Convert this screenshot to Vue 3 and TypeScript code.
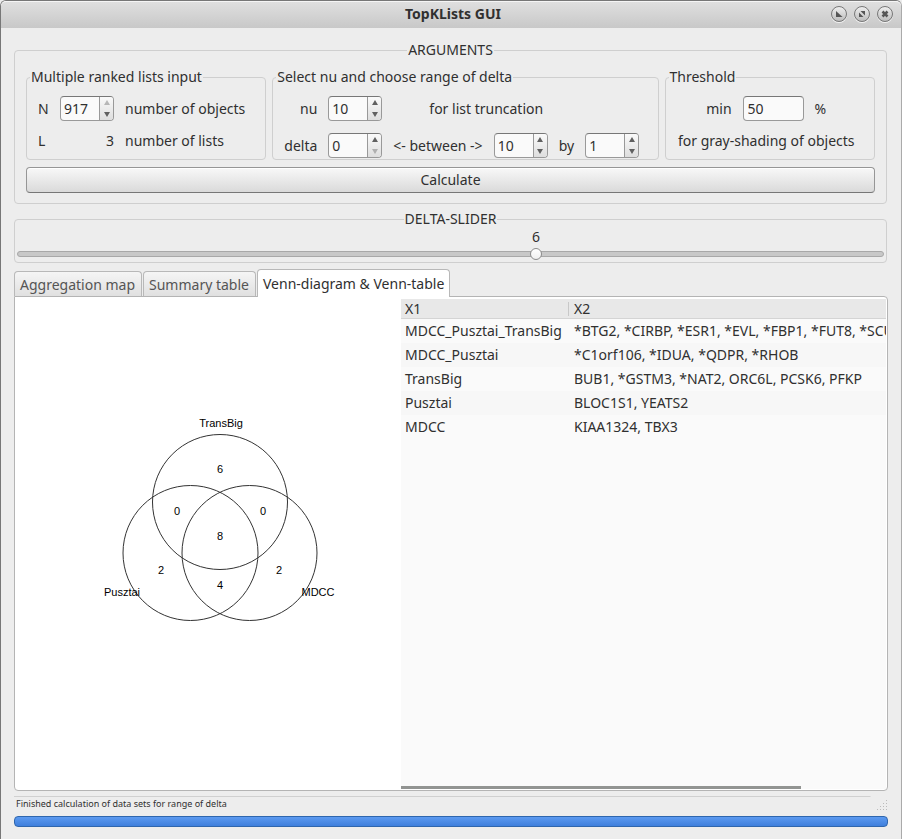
<script setup lang="ts">
import { computed, ref } from 'vue'

interface VennRow {
  sets: string
  genes: string
}

interface VennLabel {
  text: string
  x: number
  y: number
}

const objects = ref(917)
const nu = ref(10)
const deltaMin = ref(0)
const deltaMax = ref(10)
const deltaStep = ref(1)
const threshold = ref('50')
const delta = ref(6)
const activeTab = ref(2)

const tabs = ['Aggregation map', 'Summary table', 'Venn-diagram & Venn-table']

const rows: VennRow[] = [
  { sets: 'MDCC_Pusztai_TransBig', genes: '*BTG2, *CIRBP, *ESR1, *EVL, *FBP1, *FUT8, *SCU' },
  { sets: 'MDCC_Pusztai', genes: '*C1orf106, *IDUA, *QDPR, *RHOB' },
  { sets: 'TransBig', genes: 'BUB1, *GSTM3, *NAT2, ORC6L, PCSK6, PFKP' },
  { sets: 'Pusztai', genes: 'BLOC1S1, YEATS2' },
  { sets: 'MDCC', genes: 'KIAA1324, TBX3' },
]

const vennLabels: VennLabel[] = [
  { text: 'TransBig', x: 206, y: 130 },
  { text: 'Pusztai', x: 107, y: 299 },
  { text: 'MDCC', x: 303, y: 299 },
  { text: '6', x: 205, y: 176 },
  { text: '0', x: 162, y: 218 },
  { text: '0', x: 248, y: 218 },
  { text: '8', x: 205, y: 243 },
  { text: '2', x: 146, y: 277 },
  { text: '2', x: 264, y: 277 },
  { text: '4', x: 205, y: 292 },
]

const sliderOffset = computed(() => `${(delta.value / 10) * 100}%`)
</script>

<template>
  <div class="window">
    <header class="titlebar">
      <h1>TopKLists GUI</h1>
      <div class="window-buttons">
        <button type="button" aria-label="Minimize">
          <svg viewBox="0 0 14 14"><path d="M4 4v6h6.500z" /></svg>
        </button>
        <button type="button" aria-label="Maximize">
          <svg viewBox="0 0 14 14"><path d="M5.500 4H10v4.500zM4 5.500V10h4.500z" /></svg>
        </button>
        <button type="button" aria-label="Close">
          <svg viewBox="0 0 14 14"><path class="cross" d="M4.500 4.500l5 5M9.500 4.500l-5 5" /></svg>
        </button>
      </div>
    </header>

    <main class="content">
      <fieldset class="group arguments">
        <legend class="centered">ARGUMENTS</legend>
        <div class="groups">
          <fieldset class="group lists">
            <legend>Multiple ranked lists input</legend>
            <div class="lists-grid">
              <label for="objects">N</label>
              <div class="spin">
                <input id="objects" v-model.number="objects" type="number" max="917" />
                <div class="steps">
                  <button type="button" aria-label="Increase N" disabled><i class="up"></i></button>
                  <button type="button" aria-label="Decrease N" @click="objects--"><i class="down"></i></button>
                </div>
              </div>
              <span>number of objects</span>
              <span>L</span>
              <span class="right">3</span>
              <span>number of lists</span>
            </div>
          </fieldset>

          <fieldset class="group range">
            <legend>Select nu and choose range of delta</legend>
            <div class="range-grid">
              <label class="right" for="nu">nu</label>
              <div class="spin">
                <input id="nu" v-model.number="nu" type="number" />
                <div class="steps">
                  <button type="button" aria-label="Increase nu" @click="nu++"><i class="up"></i></button>
                  <button type="button" aria-label="Decrease nu" @click="nu--"><i class="down"></i></button>
                </div>
              </div>
              <span class="truncation">for list truncation</span>
              <label class="right" for="delta-min">delta</label>
              <div class="spin">
                <input id="delta-min" v-model.number="deltaMin" type="number" min="0" />
                <div class="steps">
                  <button type="button" aria-label="Increase lower delta" @click="deltaMin++"><i class="up"></i></button>
                  <button type="button" aria-label="Decrease lower delta" disabled><i class="down"></i></button>
                </div>
              </div>
              <label for="delta-max">&lt;- between -&gt;</label>
              <div class="spin">
                <input id="delta-max" v-model.number="deltaMax" type="number" />
                <div class="steps">
                  <button type="button" aria-label="Increase upper delta" @click="deltaMax++"><i class="up"></i></button>
                  <button type="button" aria-label="Decrease upper delta" @click="deltaMax--"><i class="down"></i></button>
                </div>
              </div>
              <label for="delta-step">by</label>
              <div class="spin">
                <input id="delta-step" v-model.number="deltaStep" type="number" />
                <div class="steps">
                  <button type="button" aria-label="Increase step" @click="deltaStep++"><i class="up"></i></button>
                  <button type="button" aria-label="Decrease step" @click="deltaStep--"><i class="down"></i></button>
                </div>
              </div>
            </div>
          </fieldset>

          <fieldset class="group threshold">
            <legend>Threshold</legend>
            <div class="threshold-rows">
              <div class="threshold-field">
                <label for="threshold">min</label>
                <input id="threshold" v-model="threshold" class="entry" type="text" />
                <span>%</span>
              </div>
              <span>for gray-shading of objects</span>
            </div>
          </fieldset>
        </div>
        <button class="calculate" type="button">Calculate</button>
      </fieldset>

      <fieldset class="group slider-group">
        <legend class="centered">DELTA-SLIDER</legend>
        <div class="slider-scale">
          <output class="slider-value" for="delta" :style="{ marginLeft: sliderOffset }">{{ delta }}</output>
        </div>
        <input id="delta" v-model.number="delta" class="slider" type="range" min="0" max="10" aria-label="Delta" />
      </fieldset>

      <div class="tabs" role="tablist">
        <button
          v-for="(tab, index) in tabs"
          :key="tab"
          class="tab"
          :class="{ active: index === activeTab }"
          type="button"
          role="tab"
          :aria-selected="index === activeTab"
          @click="activeTab = index"
        >
          {{ tab }}
        </button>
      </div>

      <section class="pane" role="tabpanel">
        <svg class="venn" viewBox="0 0 386 492" preserveAspectRatio="xMidYMin meet">
          <circle cx="205" cy="205" r="67.5" />
          <circle cx="175.500" cy="256" r="67.5" />
          <circle cx="234.500" cy="256" r="67.5" />
          <text v-for="(label, index) in vennLabels" :key="index" :x="label.x" :y="label.y">{{ label.text }}</text>
        </svg>
        <div class="table-view">
          <table>
            <colgroup>
              <col class="sets-column" />
              <col />
            </colgroup>
            <thead>
              <tr>
                <th scope="col">X1</th>
                <th scope="col">X2</th>
              </tr>
            </thead>
            <tbody>
              <tr v-for="row in rows" :key="row.sets">
                <td>{{ row.sets }}</td>
                <td>{{ row.genes }}</td>
              </tr>
            </tbody>
          </table>
          <div class="scrollbar"></div>
        </div>
      </section>

      <footer class="status">
        <div class="status-line">
          <p>Finished calculation of data sets for range of delta</p>
          <svg class="grip" viewBox="0 0 12 12">
            <path d="M10 1.500h1M7 4.500h1M10 4.500h1M4 7.500h1M7 7.500h1M10 7.500h1M1 10.500h1M4 10.500h1M7 10.500h1M10 10.500h1" />
          </svg>
        </div>
        <div class="progress" role="progressbar" aria-label="Calculation progress" aria-valuenow="100"></div>
      </footer>
    </main>
  </div>
</template>

<style>
body {
  background: #ededed;
}
</style>

<style scoped>
* {
  box-sizing: border-box;
}

.window {
  display: flex;
  flex-direction: column;
  min-height: 100vh;
  border: 1px solid #777;
  border-right-color: #aaa;
  border-radius: 6px 6px 0 0;
  background: #ededed;
  color: #303030;
  font-family: "Noto Sans", "Open Sans", sans-serif;
  font-size: 14px;
  line-height: 20px;
}

button,
input {
  margin: 0;
  color: inherit;
  font: inherit;
}

.titlebar {
  display: grid;
  grid-template-columns: 1fr auto 1fr;
  align-items: center;
  height: 27px;
  padding: 0 8px 2px 12px;
  border-top: 1px solid #f5f5f5;
  border-radius: 5px 5px 0 0;
  background: linear-gradient(#dfdfdf, #c8c8c8);
}

h1 {
  grid-column: 2;
  margin: 0;
  font-size: 14px;
  font-weight: 700;
}

.window-buttons {
  display: flex;
  justify-content: flex-end;
  gap: 7px;
}

.window-buttons button {
  width: 16px;
  height: 16px;
  padding: 0;
  border: 1px solid #777;
  border-radius: 50%;
  background: linear-gradient(#eee, #bcbcbc);
  box-shadow: 0 1px 0 #f2f2f2;
}

.window-buttons svg {
  display: block;
  width: 100%;
  fill: #555;
}

.window-buttons .cross {
  stroke: #555;
  stroke-width: 2.5;
}

.content {
  display: flex;
  flex: 1;
  flex-direction: column;
  padding: 12px 13px 13px;
}

.group {
  min-width: 0;
  margin: 0;
  padding: 0;
  border: 1px solid #cfcfcf;
  border-radius: 4px;
}

.group > legend {
  margin-left: 3px;
  padding: 0 1px;
}

.group > legend.centered {
  margin: 0 auto;
}

.arguments {
  margin-right: 1px;
  padding: 7px 11px 10px;
}

.groups {
  display: flex;
  gap: 6px;
}

.lists {
  flex: 240 1 0;
}

.range {
  flex: 387 1 0;
}

.threshold {
  flex: 210 1 0;
}

.lists-grid,
.range-grid {
  display: grid;
  justify-content: start;
  align-items: center;
  column-gap: 11px;
  padding: 9px 11px 0;
  white-space: nowrap;
}

.lists-grid {
  grid-template-columns: 11px auto auto;
  row-gap: 10px;
}

.range-grid {
  grid-template-columns: repeat(6, auto);
  row-gap: 12px;
  padding-bottom: 1px;
}

.right {
  text-align: right;
}

.truncation {
  grid-column: 3 / 7;
  padding-left: 36px;
}

.spin {
  display: flex;
  width: 54px;
  height: 25px;
  overflow: hidden;
  border: 1px solid #999;
  border-top-color: #777;
  border-radius: 4px;
  background: #fafafa;
}

.spin input {
  flex: 1;
  min-width: 0;
  padding: 0 3px;
  border: 0;
  outline: 0;
  background: transparent;
  appearance: textfield;
}

.spin input::-webkit-inner-spin-button {
  appearance: none;
}

.steps {
  display: flex;
  flex-direction: column;
  width: 14px;
  border-left: 1px solid #999;
  background: linear-gradient(#fafafa, #dedede);
}

.steps button {
  display: flex;
  flex: 1;
  align-items: center;
  justify-content: center;
  padding: 0;
  border: 0;
  background: transparent;
}

.steps i {
  border: 3px solid transparent;
}

.steps .up {
  border-top: 0;
  border-bottom: 5px solid #606060;
}

.steps .down {
  border-top: 5px solid #606060;
  border-bottom: 0;
}

.steps button:disabled {
  opacity: 0.4;
}

.threshold-rows {
  display: flex;
  flex-direction: column;
  align-items: center;
  gap: 10px;
  padding: 9px 18px 0 11px;
  white-space: nowrap;
}

.threshold-field {
  display: flex;
  align-items: center;
  gap: 11px;
}

.entry {
  width: 61px;
  height: 25px;
  padding: 0 4px;
  border: 1px solid #999;
  border-top-color: #777;
  border-radius: 4px;
  background: #fafafa;
}

.calculate {
  display: block;
  width: 100%;
  height: 26px;
  margin-top: 7px;
  padding: 0;
  border: 1px solid #969696;
  border-bottom-color: #777;
  border-radius: 4px;
  background: linear-gradient(#f8f8f8, #dadada);
  box-shadow: inset 0 1px 0 #fff;
}

.slider-group {
  margin: 5px 1px 0 0;
  padding: 0 2px;
}

.slider-scale {
  display: flex;
  height: 17px;
  padding: 0 6px;
}

.slider-value {
  line-height: 15px;
  transform: translateX(-50%);
}

.slider {
  display: block;
  width: 100%;
  height: 16px;
  appearance: none;
  background: transparent;
}

.slider::-webkit-slider-runnable-track {
  height: 6px;
  border: 1px solid #a8a8a8;
  border-radius: 3px;
  background: #c8c8c8;
}

.slider::-webkit-slider-thumb {
  width: 12px;
  height: 12px;
  margin-top: -4px;
  appearance: none;
  border: 1px solid #8c8c8c;
  border-radius: 50%;
  background: linear-gradient(#fff, #f0f0f0);
}

.tabs {
  display: flex;
  align-items: flex-end;
  gap: 1px;
  margin-top: 6px;
}

.tab {
  height: 25px;
  padding: 1px 5px 0;
  border: 1px solid #b8b8b8;
  border-bottom: 0;
  border-radius: 4px 4px 0 0;
  background: linear-gradient(#f5f5f5, #e0e0e0);
  color: #555;
  white-space: nowrap;
}

.tab:not(.active) {
  padding-right: 6px;
}

.tab.active {
  z-index: 1;
  height: 28px;
  margin-bottom: -1px;
  background: #fff;
  color: #303030;
}

.pane {
  display: flex;
  flex: 1;
  padding: 2px 1px 1px 0;
  border: 1px solid #b4b4b4;
  border-radius: 0 4px 4px 4px;
  background: #fff;
}

.venn {
  flex: 386 1 0;
  min-width: 0;
  margin-top: -2px;
  overflow: visible;
}

.venn circle {
  fill: none;
  stroke: #333;
  stroke-width: 1;
}

.venn text {
  fill: #000;
  font-family: "Liberation Sans", Arial, sans-serif;
  font-size: 11px;
  text-anchor: middle;
}

.table-view {
  display: flex;
  flex: 485 1 0;
  flex-direction: column;
  justify-content: space-between;
  min-width: 0;
  overflow: hidden;
  background: #fafafa;
}

table {
  width: 100%;
  border-spacing: 0;
  table-layout: fixed;
}

.sets-column {
  width: 169px;
}

th,
td {
  height: 24px;
  padding: 0 4px;
  overflow: hidden;
  font-weight: 400;
  line-height: 20px;
  text-align: left;
  white-space: nowrap;
}

td {
  padding-right: 0;
}

th {
  height: 20px;
  border-bottom: 1px solid #d4d4d4;
  background: #e8e8e8;
  line-height: 19px;
}

th:first-child {
  background: linear-gradient(#c8c8c8, #c8c8c8) right 1px center / 1px 14px no-repeat #e8e8e8;
}

tbody tr:nth-child(even) {
  background: #f7f7f7;
}

.scrollbar {
  width: 400px;
  max-width: 100%;
  height: 3px;
  background: #929492;
}

.status {
  margin-top: 5px;
}

.status-line {
  display: flex;
  justify-content: space-between;
  height: 20px;
  background: linear-gradient(#d0d0d0, #d0d0d0) left top / 98% 1px no-repeat;
}

.status p {
  margin: 0;
  padding-left: 2px;
  font-size: 9px;
  line-height: 16px;
}

.grip {
  width: 12px;
  height: 12px;
  margin-top: 3px;
  stroke: #bbb;
}

.progress {
  height: 11px;
  border: 1px solid #2f66ad;
  border-radius: 4px;
  background: linear-gradient(#5c9af0, #3f7fdc);
}
</style>
